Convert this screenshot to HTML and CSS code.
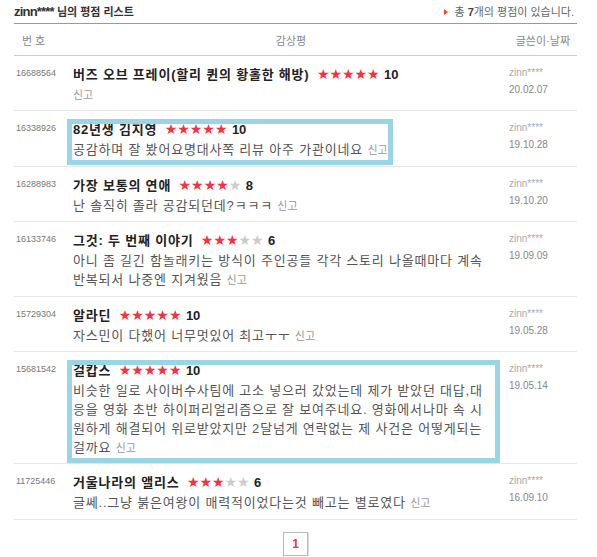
FILE: index.html
```html
<!DOCTYPE html>
<html lang="ko">
<head>
    <meta charset="UTF-8">
    <title>평점 리스트</title>
    <link rel="stylesheet" href="styles.css">
</head>
<body>

    <div class="board">

        <div class="head">
            <h2><span class="uid">zinn****</span> 님의 평점 리스트</h2>
            <p class="total"><span class="arrow"></span>총 <b>7</b>개의 평점이 있습니다.</p>
        </div>

        <div class="cols">
            <span class="c-num">번호</span>
            <span class="c-body">감상평</span>
            <span class="c-writer">글쓴이·날짜</span>
        </div>

        <div class="row">
            <div class="num">16688564</div>
            <div class="cell">
                <div class="body">
                    <p class="title">버즈 오브 프레이(할리 퀸의 황홀한 해방) <span class="stars">★★★★★</span> <b class="score">10</b></p>
                    <p class="text"><a class="report">신고</a></p>
                </div>
            </div>
            <div class="writer"><span class="id">zinn****</span><span class="date">20.02.07</span></div>
        </div>

        <div class="row">
            <div class="num">16338926</div>
            <div class="cell">
                <div class="body mark">
                    <p class="title">82년생 김지영 <span class="stars">★★★★★</span> <b class="score">10</b></p>
                    <p class="text">공감하며 잘 봤어요명대사쪽 리뷰 아주 가관이네요 <a class="report">신고</a></p>
                </div>
            </div>
            <div class="writer"><span class="id">zinn****</span><span class="date">19.10.28</span></div>
        </div>

        <div class="row">
            <div class="num">16288983</div>
            <div class="cell">
                <div class="body">
                    <p class="title">가장 보통의 연애 <span class="stars">★★★★<i>★</i></span> <b class="score">8</b></p>
                    <p class="text">난 솔직히 졸라 공감되던데?ㅋㅋㅋ <a class="report">신고</a></p>
                </div>
            </div>
            <div class="writer"><span class="id">zinn****</span><span class="date">19.10.20</span></div>
        </div>

        <div class="row">
            <div class="num">16133746</div>
            <div class="cell">
                <div class="body">
                    <p class="title">그것: 두 번째 이야기 <span class="stars">★★★<i>★★</i></span> <b class="score">6</b></p>
                    <p class="text">아니 좀 길긴 함놀래키는 방식이 주인공들 각각 스토리 나올때마다 계속 반복되서 나중엔 지겨웠음 <a class="report">신고</a></p>
                </div>
            </div>
            <div class="writer"><span class="id">zinn****</span><span class="date">19.09.09</span></div>
        </div>

        <div class="row">
            <div class="num">15729304</div>
            <div class="cell">
                <div class="body">
                    <p class="title">알라딘 <span class="stars">★★★★★</span> <b class="score">10</b></p>
                    <p class="text">자스민이 다했어 너무멋있어 최고ㅜㅜ <a class="report">신고</a></p>
                </div>
            </div>
            <div class="writer"><span class="id">zinn****</span><span class="date">19.05.28</span></div>
        </div>

        <div class="row">
            <div class="num">15681542</div>
            <div class="cell">
                <div class="body mark">
                    <p class="title">걸캅스 <span class="stars">★★★★★</span> <b class="score">10</b></p>
                    <p class="text">비슷한 일로 사이버수사팀에 고소 넣으러 갔었는데 제가 받았던 대답,대응을 영화 초반 하이퍼리얼리즘으로 잘 보여주네요. 영화에서나마 속 시원하게 해결되어 위로받았지만 2달넘게 연락없는 제 사건은 어떻게되는 걸까요 <a class="report">신고</a></p>
                </div>
            </div>
            <div class="writer"><span class="id">zinn****</span><span class="date">19.05.14</span></div>
        </div>

        <div class="row">
            <div class="num">11725446</div>
            <div class="cell">
                <div class="body">
                    <p class="title">거울나라의 앨리스 <span class="stars">★★★<i>★★</i></span> <b class="score">6</b></p>
                    <p class="text">글쎄..그냥 붉은여왕이 매력적이었다는것 빼고는 별로였다 <a class="report">신고</a></p>
                </div>
            </div>
            <div class="writer"><span class="id">zinn****</span><span class="date">16.09.10</span></div>
        </div>

        <div class="paging">
            <a class="page">1</a>
        </div>

    </div>

</body>
</html>
```

FILE: styles.css
```css
*{
    margin: 0;
    padding: 0;
    box-sizing: border-box;
}

body{
    background: #fff;
    font-family: "Liberation Sans", "Noto Sans CJK KR", sans-serif;
    color: #555;
}

.board{
    width: 563px;
    margin-left: 14px;
}

/* header */

.head{
    display: flex;
    justify-content: space-between;
    align-items: center;
    height: 24px;
    border-bottom: 1px solid #999;
    padding-bottom: 2px;
}

.head h2{
    font-size: 11px;
    font-weight: bold;
    color: #333;
}

.uid{
    font-size: 13px;
    letter-spacing: -0.8px;
}

.total{
    font-size: 11px;
    color: #666;
    padding-right: 3px;
}

.total b{
    color: #444;
}

.arrow{
    display: inline-block;
    width: 0;
    height: 0;
    border-top: 3px solid transparent;
    border-bottom: 3px solid transparent;
    border-left: 4px solid #f04a1a;
    margin-right: 6px;
    vertical-align: 1px;
}

.cols{
    display: flex;
    align-items: center;
    height: 32px;
    border-bottom: 1px solid #ccc;
    font-size: 11px;
    color: #888;
}

.c-num{
    width: 59px;
    padding-left: 8px;
    letter-spacing: 3px;
}

.c-body{
    width: 436px;
    text-align: center;
}

.c-writer{
    flex: 1;
    text-align: right;
    padding-right: 7px;
}

/* rows */

.row{
    display: flex;
    border-bottom: 1px solid #e6e6e6;
}

.num{
    width: 59px;
    padding: 12px 0 0 2px;
    font-size: 9px;
    color: #777;
}

.cell{
    width: 436px;
    padding: 9px 0 6.4px;
    font-size: 0;
}

.body{
    display: inline-block;
    max-width: 422px;
    vertical-align: top;
    word-break: break-all;
}

.mark{
    position: relative;
}

.mark::after{
    content: "";
    position: absolute;
    left: -6px;
    top: -1px;
    right: -5px;
    bottom: -6px;
    border: 5px solid #9ad5e6;
}

.title{
    font-size: 13px;
    font-weight: bold;
    line-height: 20px;
    height: 20px;
    letter-spacing: 0.8px;
    color: #222;
}

.stars{
    font-family: "DejaVu Sans", sans-serif;
    font-size: 14px;
    font-weight: normal;
    line-height: 1;
    letter-spacing: 0;
    color: #f5323f;
    margin-left: 3px;
}

.stars i{
    font-style: normal;
    color: #ccc;
}

.score{
    font-size: 13px;
    line-height: 1;
    letter-spacing: 0;
    color: #222;
}

.text{
    font-size: 13px;
    line-height: 19px;
    letter-spacing: 0.8px;
    color: #555;
}

.report{
    font-size: 11px;
    line-height: 1;
    letter-spacing: 0;
    color: #999;
}

.writer{
    flex: 1;
    display: flex;
    flex-direction: column;
    padding: 8px 0 0 0;
    font-size: 10px;
    line-height: 17px;
}

.writer .id{
    color: #aaa;
}

.writer .date{
    color: #888;
}

/* paging */

.paging{
    display: flex;
    justify-content: center;
    padding-top: 12px;
}

.page{
    width: 25px;
    height: 24px;
    line-height: 22px;
    text-align: center;
    border: 1px solid #bbb;
    box-shadow: 1px 1px 1px #ddd;
    font-size: 12px;
    font-weight: bold;
    color: #e8353f;
}
```
